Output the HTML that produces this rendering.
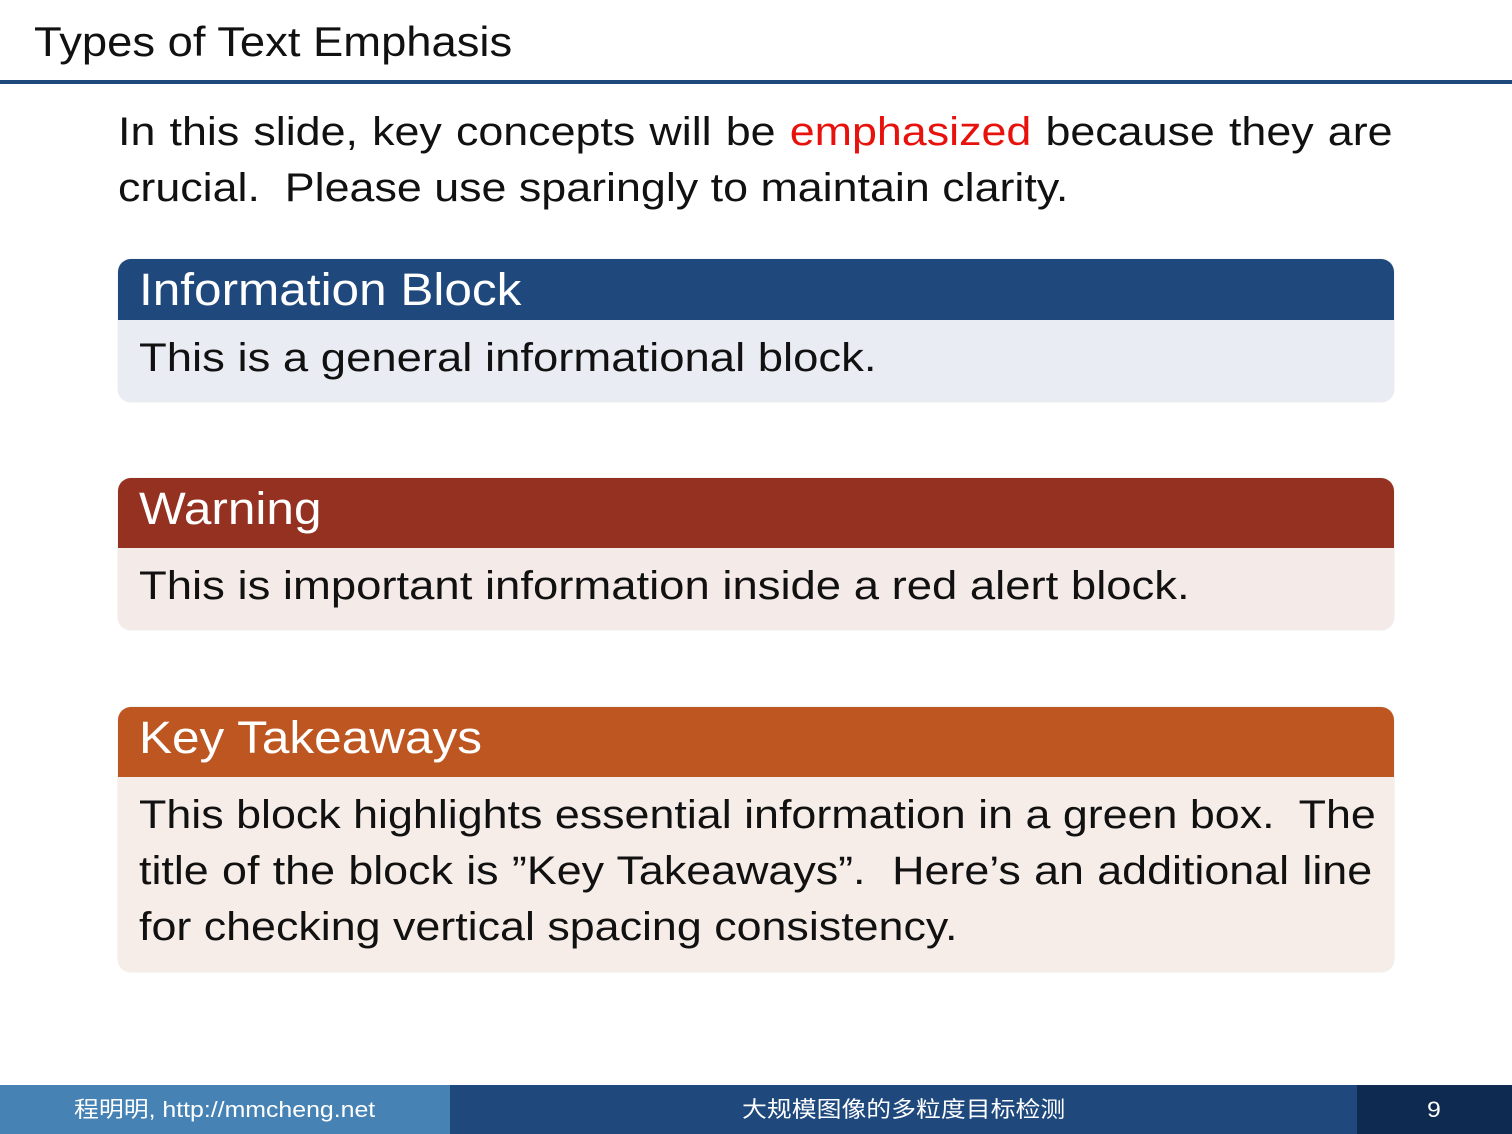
<!DOCTYPE html>
<html><head><style>
body{margin:0;width:1512px;height:1134px;position:relative;background:#fff;font-family:"Liberation Sans","Noto Sans CJK SC",sans-serif;overflow:hidden}
.t{position:absolute;left:34px;top:18px;font-size:42px;color:#111;transform:scaleX(1.08);transform-origin:0 0;white-space:nowrap}
.hl{position:absolute;left:0;top:80px;width:1512px;height:4px;background:#1f497d}
.intro{position:absolute;left:118px;top:104px;font-size:40px;line-height:56px;color:#111;width:1138px;transform:scaleX(1.12);transform-origin:0 0}
.j{text-align:justify;text-align-last:justify;white-space:nowrap}
.blk{position:absolute;left:118px;width:1276px;border-radius:13px;overflow:hidden;box-shadow:0 0 1px rgba(0,0,0,.25)}
.bh{color:#fff;font-size:45px;padding-left:21px;box-sizing:border-box}
.bh span{display:inline-block;transform:scaleX(1.10);transform-origin:0 0;white-space:nowrap}
.bb{font-size:40px;padding-left:21px;color:#111;box-sizing:border-box;line-height:56px}
.bb .w{width:1085px;transform:scaleX(1.136);transform-origin:0 0;white-space:nowrap}
.bb .k{width:1101px;transform:scaleX(1.12);transform-origin:0 0}
.f{position:absolute;top:1085px;height:49px;color:#fff;font-size:22px;line-height:49px}
.f span{display:inline-block;transform:scaleX(1.13);transform-origin:0 50%;white-space:nowrap}
</style></head><body>
<div class="t">Types of Text Emphasis</div>
<div class="hl"></div>
<div class="intro"><div class="j">In this slide, key concepts will be <span style="color:#e8120c">emphasized</span> because they are</div><div>crucial.&nbsp; Please use sparingly to maintain clarity.</div></div>

<div class="blk" style="top:259px">
<div class="bh" style="background:#1f497d;height:61px;line-height:61px"><span>Information Block</span></div>
<div class="bb" style="background:#e9ecf3;height:82px;padding-top:10px"><div class="w">This is a general informational block.</div></div>
</div>

<div class="blk" style="top:478px">
<div class="bh" style="background:#943120;height:70px;line-height:62px"><span>Warning</span></div>
<div class="bb" style="background:#f4eae7;height:82px;padding-top:10px"><div class="w">This is important information inside a red alert block.</div></div>
</div>

<div class="blk" style="top:707px">
<div class="bh" style="background:#be5621;height:70px;line-height:62px"><span>Key Takeaways</span></div>
<div class="bb" style="background:#f6ece8;height:195px;padding-top:10px"><div class="k"><div class="j">This block highlights essential information in a green box.&nbsp; The</div><div class="j">title of the block is ”Key Takeaways”.&nbsp; Here’s an additional line</div><div>for checking vertical spacing consistency.</div></div></div>
</div>

<div class="f" style="left:0;width:450px;background:#4682b4"><span style="margin-left:74px">程明明, http://mmcheng.net</span></div>
<div class="f" style="left:450px;width:907px;background:#1f497d"><span style="margin-left:292px">大规模图像的多粒度目标检测</span></div>
<div class="f" style="left:1357px;width:155px;background:#0f2a50"><span style="margin-left:70px">9</span></div>
</body></html>
